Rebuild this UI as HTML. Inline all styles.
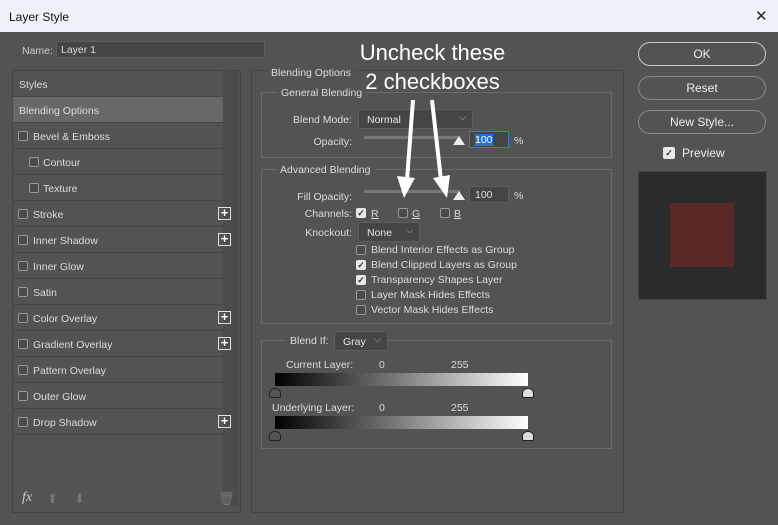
<!DOCTYPE html>
<html><head><style>
*{margin:0;padding:0;box-sizing:border-box}
body{width:778px;height:525px;background:#535353;font-family:"Liberation Sans",sans-serif;font-size:10.5px;color:#dcdcdc;position:relative;overflow:hidden}
.a{position:absolute}
.title{left:0;top:0;width:778px;height:32px;background:#eef2f8;color:#111;font-size:12px;padding:10px 9px}
.row{position:absolute;left:13px;width:210px;height:26px;border-bottom:1px solid #464646;padding:8px 0 0 6px}
.cb{position:absolute;width:10px;height:10px;border:1px solid #9a9a9a;border-radius:2px;background:#4a4a4a}
.cbc{position:absolute;width:10px;height:10px;border-radius:2px;background:#e8e8e8;color:#333;font-size:9px;line-height:10px;text-align:center;font-weight:bold}
.plus{position:absolute;left:205px;top:6px;width:13px;height:13px;border:1px solid #e0e0e0;color:#fff;font-size:13px;line-height:10px;text-align:center;font-weight:bold}
.box{position:absolute;border:1px solid #6a6a6a}
.lg{position:absolute;background:#535353;padding:0 4px}
.sel{position:absolute;background:#454545;border:1px solid #5e5e5e;border-radius:3px;padding:4px 8px;color:#e6e6e6}
.sel:after{content:"⌵";position:absolute;right:6px;top:2px;font-size:9px;color:#bbb}
.btn{position:absolute;left:638px;width:128px;height:24px;border:1px solid #8a8a8a;border-radius:12px;text-align:center;line-height:22px;font-size:12px;color:#eee}
.lbl{position:absolute;text-align:right;width:80px;left:272px}
.trk{position:absolute;height:3px;background:#777}
.inp{position:absolute;background:#454545;border:1px solid #5e5e5e;width:40px;height:17px;padding:2px 5px}
.tri{position:absolute;width:0;height:0;border-left:6px solid transparent;border-right:6px solid transparent;border-bottom:9px solid #eee}
.grad{position:absolute;left:275px;width:253px;height:13px;background:linear-gradient(90deg,#000,#fff)}
.ht{position:absolute;width:12px;height:10px;border:1px solid #222;border-radius:50% 50% 2px 2px}
</style></head><body>
<div class="a title">Layer Style</div>
<div class="a" style="left:755px;top:7px;font-size:15px;color:#222">✕</div>

<div class="a" style="left:22px;top:45px;color:#ccc">Name:</div>
<div class="a" style="left:56px;top:41px;width:209px;height:17px;background:#454545;border:1px solid #5e5e5e;padding:2px 4px">Layer 1</div>

<div class="box" style="left:12px;top:70px;width:229px;height:443px;border-color:#454545;background:#535353"></div>
<div class="a" style="left:223px;top:71px;width:16px;height:435px;background:#4c4c4c"></div>
<div class="row" style="top:71px">Styles</div>
<div class="row" style="top:97px;background:#686868">Blending Options</div>
<div class="row" style="top:123px"><span class="cb" style="left:5px;top:8px"></span><span style="margin-left:14px">Bevel &amp; Emboss</span></div>
<div class="row" style="top:149px"><span class="cb" style="left:16px;top:8px"></span><span style="margin-left:24px">Contour</span></div>
<div class="row" style="top:175px"><span class="cb" style="left:16px;top:8px"></span><span style="margin-left:24px">Texture</span></div>
<div class="row" style="top:201px"><span class="cb" style="left:5px;top:8px"></span><span style="margin-left:14px">Stroke</span><span class="plus">+</span></div>
<div class="row" style="top:227px"><span class="cb" style="left:5px;top:8px"></span><span style="margin-left:14px">Inner Shadow</span><span class="plus">+</span></div>
<div class="row" style="top:253px"><span class="cb" style="left:5px;top:8px"></span><span style="margin-left:14px">Inner Glow</span></div>
<div class="row" style="top:279px"><span class="cb" style="left:5px;top:8px"></span><span style="margin-left:14px">Satin</span></div>
<div class="row" style="top:305px"><span class="cb" style="left:5px;top:8px"></span><span style="margin-left:14px">Color Overlay</span><span class="plus">+</span></div>
<div class="row" style="top:331px"><span class="cb" style="left:5px;top:8px"></span><span style="margin-left:14px">Gradient Overlay</span><span class="plus">+</span></div>
<div class="row" style="top:357px"><span class="cb" style="left:5px;top:8px"></span><span style="margin-left:14px">Pattern Overlay</span></div>
<div class="row" style="top:383px"><span class="cb" style="left:5px;top:8px"></span><span style="margin-left:14px">Outer Glow</span></div>
<div class="row" style="top:409px"><span class="cb" style="left:5px;top:8px"></span><span style="margin-left:14px">Drop Shadow</span><span class="plus">+</span></div>
<div class="a" style="left:22px;top:490px;font-style:italic;font-size:14px;font-family:'Liberation Serif',serif;color:#ccc">fx</div>
<div class="a" style="left:47px;top:491px;color:#777;font-size:13px">⬆</div>
<div class="a" style="left:74px;top:491px;color:#777;font-size:13px">⬇</div>
<div class="a" style="left:218px;top:491px;color:#777;font-size:13px">🗑</div>

<div class="box" style="left:251px;top:70px;width:373px;height:443px;border-color:#454545"></div>
<div class="lg" style="left:267px;top:67px">Blending Options</div>

<div class="box" style="left:261px;top:92px;width:351px;height:66px"></div>
<div class="lg" style="left:277px;top:87px">General Blending</div>
<div class="lbl" style="top:114px">Blend Mode:</div>
<div class="sel" style="left:358px;top:109px;width:115px;height:20px">Normal</div>
<div class="lbl" style="top:136px">Opacity:</div>
<div class="trk" style="left:364px;top:136px;width:96px"></div>
<div class="tri" style="left:453px;top:136px"></div>
<div class="inp" style="left:469px;top:131px;border-color:#3a7bd5;width:40px"><span style="background:#2c6ecb;color:#fff">100</span></div>
<div class="a" style="left:514px;top:135px">%</div>

<div class="box" style="left:261px;top:169px;width:351px;height:155px"></div>
<div class="lg" style="left:276px;top:164px">Advanced Blending</div>
<div class="lbl" style="top:191px">Fill Opacity:</div>
<div class="trk" style="left:364px;top:190px;width:96px"></div>
<div class="tri" style="left:453px;top:191px"></div>
<div class="inp" style="left:469px;top:186px">100</div>
<div class="a" style="left:514px;top:190px">%</div>
<div class="lbl" style="top:208px">Channels:</div>
<div class="cbc" style="left:356px;top:208px">✓</div><div class="a" style="left:371px;top:208px;text-decoration:underline">R</div>
<div class="cb" style="left:398px;top:208px"></div><div class="a" style="left:412px;top:208px;text-decoration:underline">G</div>
<div class="cb" style="left:440px;top:208px"></div><div class="a" style="left:454px;top:208px;text-decoration:underline">B</div>
<div class="lbl" style="top:227px">Knockout:</div>
<div class="sel" style="left:358px;top:222px;width:62px;height:20px">None</div>
<div class="cb" style="left:356px;top:245px"></div><div class="a" style="left:371px;top:244px">Blend Interior Effects as Group</div>
<div class="cbc" style="left:356px;top:260px">✓</div><div class="a" style="left:371px;top:259px">Blend Clipped Layers as Group</div>
<div class="cbc" style="left:356px;top:275px">✓</div><div class="a" style="left:371px;top:274px">Transparency Shapes Layer</div>
<div class="cb" style="left:356px;top:290px"></div><div class="a" style="left:371px;top:289px">Layer Mask Hides Effects</div>
<div class="cb" style="left:356px;top:305px"></div><div class="a" style="left:371px;top:304px">Vector Mask Hides Effects</div>

<div class="box" style="left:261px;top:340px;width:351px;height:109px"></div>
<div class="lg" style="left:286px;top:335px">Blend If:</div>
<div class="sel" style="left:334px;top:331px;width:54px;height:20px">Gray</div>
<div class="a" style="left:286px;top:359px">Current Layer:</div>
<div class="a" style="left:379px;top:359px">0</div><div class="a" style="left:451px;top:359px">255</div>
<div class="grad" style="top:373px"></div>
<div class="ht" style="left:269px;top:388px;background:#555"></div>
<div class="ht" style="left:522px;top:388px;background:#ddd"></div>
<div class="a" style="left:272px;top:402px">Underlying Layer:</div>
<div class="a" style="left:379px;top:402px">0</div><div class="a" style="left:451px;top:402px">255</div>
<div class="grad" style="top:416px"></div>
<div class="ht" style="left:269px;top:431px;background:#555"></div>
<div class="ht" style="left:522px;top:431px;background:#ddd"></div>

<div class="btn" style="top:42px;border-color:#ccc;border-width:1.5px">OK</div>
<div class="btn" style="top:76px">Reset</div>
<div class="btn" style="top:110px">New Style...</div>
<div class="cbc" style="left:663px;top:147px;width:12px;height:12px;line-height:12px">✓</div>
<div class="a" style="left:682px;top:146px;font-size:12px;color:#eee">Preview</div>
<div class="a" style="left:638px;top:171px;width:129px;height:129px;background:#2b2b2b;border:1px solid #444"></div>
<div class="a" style="left:670px;top:203px;width:64px;height:64px;background:#5b2828"></div>

<div class="a" style="left:345px;top:38px;width:175px;text-align:center;font-size:22px;line-height:29px;color:#fff">Uncheck these<br>2 checkboxes</div>
<svg class="a" style="left:0;top:0" width="778" height="525">
<g stroke="#fff" stroke-width="4" fill="#fff">
<line x1="413" y1="100" x2="407" y2="180"/>
<line x1="432" y1="100" x2="441" y2="180"/>
</g>
<polygon points="397,176 415,178 404,198" fill="#fff"/>
<polygon points="433,178 450,175 447,198" fill="#fff"/>
</svg>
</body></html>
